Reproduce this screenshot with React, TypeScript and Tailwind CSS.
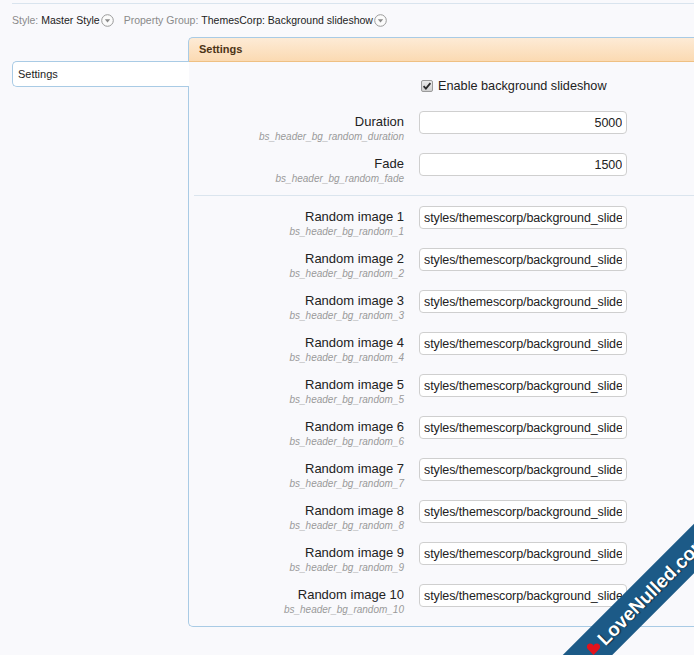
import React from 'react';

const rows = [
  { label: 'Duration', hint: 'bs_header_bg_random_duration', value: '5000', num: true },
  { label: 'Fade', hint: 'bs_header_bg_random_fade', value: '1500', num: true },
];

const images = Array.from({ length: 10 }, (_, i) => ({
  label: `Random image ${i + 1}`,
  hint: `bs_header_bg_random_${i + 1}`,
  value: 'styles/themescorp/background_slideshow/' + (i + 1) + '.jpg',
  num: false,
}));

function DropCircle() {
  return (
    <svg width="13" height="13" viewBox="0 0 13 13" className="inline-block ml-px align-[-2px]">
      <circle cx="6.5" cy="6.5" r="5.8" fill="#fbfbfb" stroke="#9a9a9a" strokeWidth="1" />
      <path d="M3.8 5.2 L9.2 5.2 L6.5 8.4 Z" fill="#8a8a8a" />
    </svg>
  );
}

function Row({ label, hint, value, num }: { label: string; hint: string; value: string; num: boolean }) {
  return (
    <div className="flex h-[42px] items-start">
      <div className="w-[215px] text-right">
        <div className="mt-px text-[13px] leading-[20px] text-[#222]">{label}</div>
        <div className="text-[10px] italic leading-[10px] text-[#9a9a9a]">{hint}</div>
      </div>
      <input
        readOnly
        value={value}
        className={`ml-[15px] h-[23px] w-[208px] rounded-[4px] border border-[#cfcfcf] bg-white px-[4px] text-[12.5px] tracking-[-0.1px] text-[#222] outline-none ${num ? 'text-right' : ''}`}
      />
    </div>
  );
}

export default function App() {
  return (
    <div className="relative h-[655px] overflow-hidden bg-[#f9f9fc] font-['Liberation_Sans',sans-serif]">
      <div className="ml-3 mt-[3px] border-t border-[#d9e4ee] pt-[9px]">
        <div className="flex items-center text-[10.5px] leading-[14px]">
          <span className="text-[#8a8a8a]">Style:</span>
          <span className="ml-[3px] text-[#222]">Master Style</span>
          <DropCircle />
          <span className="ml-[10px] text-[#8a8a8a]">Property Group:</span>
          <span className="ml-[3px] text-[#222]">ThemesCorp: Background slideshow</span>
          <DropCircle />
        </div>
      </div>

      <div className="ml-3 mt-[10px] flex">
        {/* left tab column */}
        <div className="w-[176px] pt-[24px]">
          <div className="relative z-10 -mr-px flex h-[26px] items-center rounded-l-[5px] border border-r-0 border-[#a9cbe5] bg-white px-[5px] text-[11px] text-[#1d1d1d]">
            Settings
          </div>
        </div>

        {/* main panel */}
        <div className="flex-1">
          <div className="flex h-[25px] items-center rounded-tl-[5px] border-l border-t border-b border-l-[#a9cbe5] border-t-[#a9cbe5] border-b-[#efc083] bg-gradient-to-b from-[#fdebd6] to-[#fbdab2] px-[10px] text-[11px] font-semibold text-[#4d3417]">
            Settings
          </div>
          <div className="rounded-bl-[5px] border-b border-l border-[#a9cbe5]">
            <div className="flex h-[49px] items-start pt-[16px]">
              <div className="ml-[232px] flex items-center">
                <svg width="12" height="12" viewBox="0 0 12 12">
                  <defs>
                    <linearGradient id="cb" x1="0" y1="0" x2="0" y2="1">
                      <stop offset="0" stopColor="#ececec" />
                      <stop offset="1" stopColor="#cfcfcf" />
                    </linearGradient>
                  </defs>
                  <rect x="0.5" y="0.5" width="11" height="11" rx="1.5" fill="url(#cb)" stroke="#9b9b9b" />
                  <path d="M2.6 6.2 L4.9 8.6 L9.4 3.2" fill="none" stroke="#2a2a2a" strokeWidth="1.8" />
                </svg>
                <span className="ml-[5px] text-[12.7px] leading-[16px] text-[#222]">Enable background slideshow</span>
              </div>
            </div>
            {rows.map(r => (
              <Row key={r.hint} {...r} />
            ))}
            <div className="ml-[5px] border-t border-[#dbe5ee]" />
            <div className="pt-[10px]">
              {images.map(r => (
                <Row key={r.hint} {...r} />
              ))}
            </div>
          </div>
        </div>
      </div>

      {/* watermark banner */}
      <div className="pointer-events-none absolute left-[508px] top-[582px] flex h-[35px] w-[270px] -rotate-45 items-center justify-center bg-[#1c5a87] pl-[10px]">
        <svg width="14" height="13" viewBox="0 0 14 13" className="mr-[3px] rotate-45">
          <path d="M7 12.5 L1.3 6.6 C-0.4 4.8 0.4 1.2 3.4 1.1 C5 1 6.3 2 7 3.2 C7.7 2 9 1 10.6 1.1 C13.6 1.2 14.4 4.8 12.7 6.6 Z" fill="#e3121c" />
        </svg>
        <span className="text-[19px] font-bold leading-none text-white [text-shadow:1px_1px_1px_rgba(0,0,0,0.5)]">
          LoveNulled.com
        </span>
      </div>
    </div>
  );
}
